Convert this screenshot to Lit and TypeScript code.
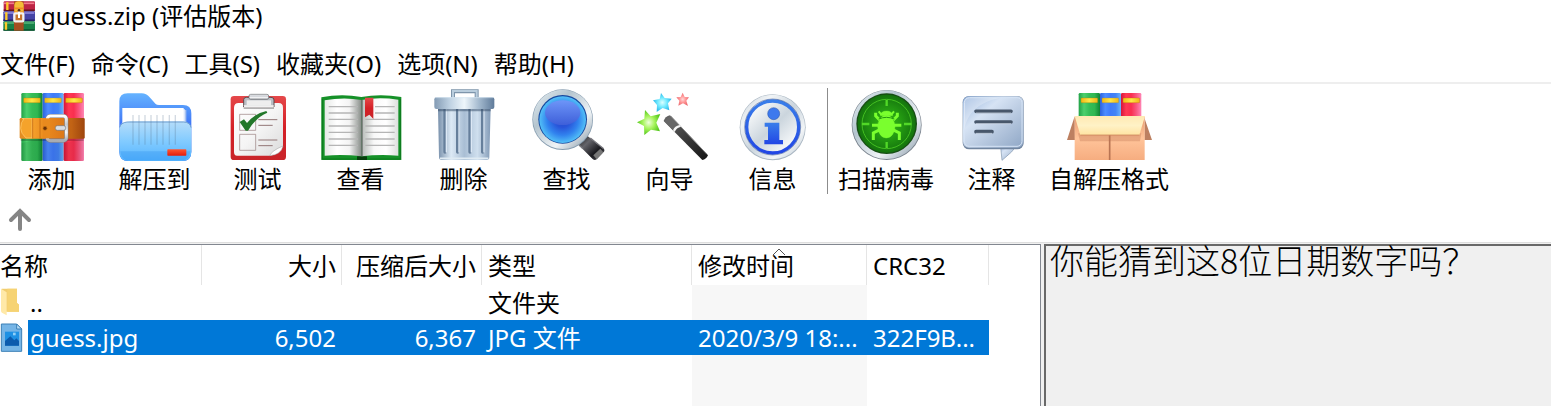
import { LitElement, html, svg, css, SVGTemplateResult } from "lit";
import { customElement, state } from "lit/decorators.js";

interface Tool {
  label: string;
  viewBox: string;
  art: SVGTemplateResult;
  separated?: boolean;
}

const books = (x: number, y: number, h: number) => svg`
  <rect x=${x} y=${y} width="64" height=${h} rx="4" fill="url(#bookGreen)"/>
  <rect x=${x + 64} y=${y} width="63" height=${h} rx="4" fill="url(#bookBlue)"/>
  <rect x=${x + 127} y=${y} width="61" height=${h} rx="4" fill="url(#bookRed)"/>
  <rect x=${x + 7} y=${y + 15} width="50" height="14" rx="2" fill="url(#label)" stroke="#b07c00"/>
  <rect x=${x + 70} y=${y + 15} width="50" height="14" rx="2" fill="url(#label)" stroke="#a08840"/>
  <rect x=${x + 133} y=${y + 15} width="50" height="14" rx="2" fill="url(#label)" stroke="#c06000"/>`;

const tools: Tool[] = [
  {
    label: "添加",
    viewBox: "10 24 288 222",
    art: svg`
      ${books(62, 39, 204)}
      <path d="M62 190 L125 175 L188 190 L249 175 V243 H62Z" fill="#000" opacity=".07"/>
      <rect x="60" y="174" width="189" height="9" fill="#000" opacity=".22"/>
      <rect x="57" y="114" width="195" height="62" rx="4" fill="url(#strap)"/>
      <path d="M64 116 H94 V174 H76 Q60 160 60 145 Q60 126 70 116Z" fill="#f5a32b" stroke="#ffcf73" stroke-width="2"/>
      <path d="M96 115 V175 M118 115 V175" stroke="#b95d0c" stroke-width="2"/>
      <rect x="202" y="114" width="50" height="62" fill="#8c3408" opacity=".25"/>
      <rect x="140" y="108" width="57" height="74" rx="9" fill="none" stroke="#7d7d85" stroke-width="12"/>
      <rect x="140" y="108" width="57" height="74" rx="9" fill="none" stroke="url(#steel)" stroke-width="9"/>
      <rect x="126" y="115" width="22" height="60" fill="#e98a1e"/>
      <circle cx="133" cy="145" r="6" fill="#6a3107" stroke="#c97514" stroke-width="2"/>
      <rect x="164" y="137" width="31" height="14" rx="6" fill="#d9dde3" stroke="#73767c" stroke-width="2"/>`,
  },
  {
    label: "解压到",
    viewBox: "320 24 288 222",
    art: svg`
      <path d="M357 64 Q357 40 382 40 H424 Q438 40 448 52 L466 72 Q469 75 476 75 H548 Q573 75 573 100 V215 Q573 243 545 243 H385 Q357 243 357 215Z" fill="url(#folderBack)"/>
      <path d="M380 90 H558 V195 H380Z" fill="#a9c2ef"/>
      <path d="M372 88 H554 V195 H372Z" fill="#d8e4fa"/>
      <rect x="366" y="84" width="184" height="115" fill="#fff"/>
      <path d="M357 145 Q358 128 376 126 L390 124 H548 Q573 126 573 146 V215 Q573 243 545 243 H385 Q357 243 357 215Z" fill="url(#folderFront)"/>
      <path d="M358 142 Q362 128 380 126 H550 Q570 127 572 143" fill="none" stroke="#4f83bd" stroke-width="2"/>
      <path d="M398 105V194M416 105V194M434 105V194M452 105V194M470 105V194M488 105V194M507 105V194M525 105V194" stroke="#52718e" stroke-width="4" opacity=".25"/>
      <path d="M360 214 H570 Q566 241 545 241 H385 Q362 241 360 214Z" fill="#2489e8" opacity=".28"/>
      <rect x="501" y="208" width="57" height="19" rx="2" fill="url(#redBar)"/>`,
  },
  {
    label: "测试",
    viewBox: "-1 24 288 222",
    art: svg`
      <rect x="61" y="48" width="166" height="192" rx="10" fill="url(#board)"/>
      <path d="M71 84 Q71 69 85 69 H205 Q218 69 218 83 V199 Q207 224 180 227 H80 Q71 227 71 216Z" fill="url(#paper)"/>
      <path d="M178 227 Q184 212 218 198 Q213 224 178 227Z" fill="#fff" stroke="#999" stroke-width="1.5"/>
      <path d="M100 77 V59 Q100 52 109 52 H182 Q191 52 191 60 V81 H100Z" fill="#b9bec4" stroke="#5e4a4c" stroke-width="3"/>
      <rect x="109" y="61" width="73" height="15" fill="#eee"/>
      <rect x="116" y="43" width="59" height="15" rx="5" fill="url(#steel)" stroke="#686b70" stroke-width="2"/>
      <path d="M101 79H190" stroke="#f1f1f1" stroke-width="7"/><path d="M100 85H191" stroke="#777" stroke-width="2"/>
      <path d="M88 103H136V151H88ZM88 163H136V211H88Z" fill="none" stroke="#957c7c" stroke-width="2"/>
      <path d="M144 119H201M144 136H187M144 180H201M144 197H187" stroke="#927676" stroke-width="3"/>
      <path d="M88 126 L101 118 L110 129 Q135 99 168 93 L171 98 Q137 112 113 152 H106Z" fill="#23772a"/>`,
  },
  {
    label: "查看",
    viewBox: "308 24 288 222",
    art: svg`
      <path d="M333 52 Q393 40 453 51 Q510 40 573 51 V240 H333Z" fill="#159128"/>
      <path d="M336 57V237H570V57" fill="none" stroke="#0b6d18" stroke-width="2"/>
      <rect x="440" y="229" width="30" height="11" fill="#073d0c"/>
      <path d="M343 61 Q400 50 454 60 V229 Q399 222 343 227Z" fill="url(#pageLeft)"/>
      <path d="M454 60 Q505 50 564 59 V227 Q507 222 454 229Z" fill="url(#pageRight)"/>
      <path d="M455 60V229" stroke="#4a504c" stroke-width="3"/>
      <path d="M355 80H443M355 99H443M355 118H443M355 138H443M355 157H443M355 177H443M355 196H443M494 80H553M494 99H553M465 118H553M465 138H553M465 157H553M465 177H553M465 196H553" stroke="#b5b5b5" stroke-width="4"/>
      <path d="M464 53H489V117L477 104L464 112Z" fill="url(#board)"/>`,
  },
  {
    label: "删除",
    viewBox: "-13 24 288 222",
    art: svg`
      <path d="M98 56V34H169V56" fill="none" stroke="#7e95ab" stroke-width="12"/>
      <path d="M98 56V33H169V56" fill="none" stroke="#b9cddd" stroke-width="6"/>
      <path d="M53 84H211L207 232Q207 240 198 240H64Q56 240 56 231Z" fill="url(#bin)"/>
      <path d="M74 88V216M112 88V216M149 88V216M187 88V216" stroke="#667f9b" stroke-width="10" stroke-linecap="round"/>
      <path d="M78 88V216M116 88V216M153 88V216M191 88V216" stroke="#dce8f5" stroke-width="4" stroke-linecap="round"/>
      <path d="M53 85H211V94H53Z" fill="#314966" opacity=".5"/>
      <rect x="42" y="52" width="180" height="35" rx="6" fill="url(#binLid)"/>
      <path d="M46 53H219" stroke="#d6e5f1" stroke-width="2"/>
      <path d="M59 235H204" stroke="#e0ebf3" stroke-width="5"/>`,
  },
  {
    label: "查找",
    viewBox: "296 24 288 222",
    art: svg`
      <path d="M484 174 L497 164 L550 206 Q555 211 549 217 L529 238 Q523 243 517 237 L474 194Z" fill="url(#handle)"/>
      <path d="M510 174 L550 206 M477 196 L488 206" stroke="#77777d" stroke-width="4"/>
      <path d="M529 238 L549 217 L540 206 L519 226Z" fill="#777"/>
      <circle cx="427" cy="119" r="91" fill="#869caf"/>
      <circle cx="427" cy="118" r="89" fill="url(#rim)"/>
      <circle cx="427" cy="118" r="73" fill="#17489f"/>
      <circle cx="427" cy="119" r="70" fill="url(#lens)"/>
      <ellipse cx="427" cy="98" rx="53" ry="37" fill="url(#gloss)"/>`,
  },
  {
    label: "向导",
    viewBox: "5 24 288 222",
    art: svg`
      <path d="M149 106 L263 226 Q257 239 246 240 L130 123Q134 110 149 106Z" fill="url(#wand)"/>
      <path d="M149 108 L180 140 L159 151 L132 124Z" fill="#676767"/>
      <path d="M151 108 L260 223" stroke="#8a8a8a" stroke-width="3"/>
      <path d="M158 151 Q163 138 178 135 L182 140 Q168 143 163 156Z" fill="#f6f6f6"/>
      <path d="M74 90 L91 109 L120 102 L108 128 L119 154 L92 149 L72 165 L71 138 L50 127 L72 116Z" fill="url(#starGreen)"/>
      <path d="M122 39 L133 54 L154 56 L143 70 L147 91 L127 84 L109 96 L110 75 L98 61 L118 57Z" fill="url(#starCyan)"/>
      <path d="M187 38 L193 51 L206 52 L198 62 L203 78 L188 70 L174 77 L177 62 L168 52 L181 51Z" fill="url(#starRed)"/>`,
  },
  {
    label: "信息",
    viewBox: "313 24 288 222",
    art: svg`
      <circle cx="456" cy="142" r="99" fill="#a9b6c2"/>
      <circle cx="456" cy="141" r="97" fill="url(#disc)"/>
      <circle cx="456" cy="141" r="78" fill="none" stroke="url(#infoBlue)" stroke-width="10"/>
      <circle cx="456" cy="141" r="84" fill="none" stroke="#26478e" stroke-width="1.5"/>
      <circle cx="459" cy="101" r="18" fill="#3d79ed" stroke="#2451a4" stroke-width="1.5"/>
      <path d="M432 128H476V180H487V193H431V180H442V140H432Z" fill="url(#infoBlue)"/>`,
  },
  {
    label: "扫描病毒",
    viewBox: "52 24 288 222",
    separated: true,
    art: svg`
      <circle cx="198" cy="135" r="105" fill="#78818c"/>
      <circle cx="198" cy="134" r="103" fill="url(#rim)"/>
      <circle cx="198" cy="131" r="91" fill="#174e14"/>
      <circle cx="198" cy="131" r="87" fill="url(#radar)"/>
      <circle cx="198" cy="132" r="74" fill="none" stroke="#43bf21" stroke-width="3"/>
      <path d="M198 60V78M198 186V204M124 132H146M250 132H272" stroke="#51d827" stroke-width="7"/>
      <g fill="#7aff2e" stroke="#7aff2e">
        <path d="M179 107 Q180 93 198 93 Q214 93 216 107Z"/>
        <ellipse cx="197" cy="140" rx="26" ry="34"/>
        <path d="M182 104L174 94M212 104L220 94" stroke-width="6"/>
        <path d="M177 120L165 108V98M218 120L230 108V98M174 136H154M220 136H242M178 149L158 159V180M216 149L236 159V180" fill="none" stroke-width="9"/>
      </g>
      <path d="M174 117Q197 107 221 117" stroke="#249812" stroke-width="3" fill="none"/>`,
  },
  {
    label: "注释",
    viewBox: "367 24 288 222",
    art: svg`
      <path d="M536 190H590Q574 216 541 241Z" fill="url(#bubble)" stroke="#8195ae" stroke-width="2"/>
      <rect x="423" y="48" width="183" height="160" rx="19" fill="#71859f"/>
      <rect x="424" y="49" width="181" height="154" rx="18" fill="url(#bubble)"/>
      <rect x="428" y="53" width="173" height="146" rx="15" fill="none" stroke="#d5e3f5" stroke-width="3"/>
      <path d="M427 153 Q437 74 534 53 H445 Q428 53 427 70Z" fill="#fff" opacity=".25"/>
      <path d="M463 94H568M463 126H568M463 155H511" stroke="#48576b" stroke-width="11" stroke-linecap="round"/>
      <path d="M463 99H568M463 131H568M463 160H511" stroke="#e3ecf7" stroke-width="2"/>`,
  },
  {
    label: "自解压格式",
    viewBox: "88 24 288 222",
    art: svg`
      ${books(141, 39, 80)}
      <path d="M129 109L106 180H130ZM339 116L361 180H338Z" fill="#bd8061"/>
      <rect x="129" y="110" width="210" height="130" fill="url(#carton)"/>
      <path d="M139 160H329L325 184H145Z" fill="#b66b45" opacity=".3"/>
      <path d="M234 166V240" stroke="#b97453" stroke-width="5"/>
      <path d="M129 108H340L323 165H146Z" fill="url(#flap)"/>
      <path d="M146 165H323" stroke="#c37a50" stroke-width="2"/>`,
  },
];

const gradient = (id: string, dir: "h" | "v" | "d", ...stops: string[]) => svg`
  <linearGradient id=${id} x1="0" y1="0" x2=${dir === "v" ? 0 : 1} y2=${dir === "h" ? 0 : 1}>
    ${stops.map((c, i) => svg`<stop offset=${i / (stops.length - 1)} stop-color=${c}></stop>`)}
  </linearGradient>`;

const radial = (id: string, ...stops: string[]) => svg`
  <radialGradient id=${id}>
    ${stops.map((c, i) => svg`<stop offset=${i / (stops.length - 1)} stop-color=${c}></stop>`)}
  </radialGradient>`;

const paints = svg`<defs>
  ${gradient("bookGreen", "h", "#22a247", "#4cd06d", "#35bd58", "#2fb752", "#0e8434")}
  ${gradient("bookBlue", "h", "#2c62dc", "#4d8cff", "#3f7bfa", "#4384f6", "#6db4fa")}
  ${gradient("bookRed", "h", "#d5153a", "#ff3853", "#f92f50", "#f9567f", "#ff86b6")}
  ${gradient("label", "h", "#f2b814", "#ffe747", "#efb516")}
  ${gradient("strap", "h", "#e08a20", "#f5a02b", "#e98a1e", "#e07c1a", "#d3731a", "#a54c10")}
  ${gradient("steel", "v", "#ffffff", "#c8ccd2", "#f5f5f7", "#a8abb1")}
  ${gradient("folderBack", "v", "#65b3ff", "#3c71f6", "#1c50da")}
  ${gradient("folderFront", "v", "#b6ddfa", "#82cbff", "#55b4ff")}
  ${gradient("redBar", "v", "#ff5733", "#e51c0b")}
  ${gradient("board", "v", "#e5484a", "#d42026", "#c9252a")}
  ${gradient("paper", "d", "#ffffff", "#f5f5f5", "#dadada")}
  ${gradient("pageLeft", "h", "#e6e8e6", "#ffffff", "#f4f4f4", "#858b86")}
  ${gradient("pageRight", "h", "#b6bbb7", "#f8f8f8", "#ffffff", "#dcdfdc")}
  ${gradient("bin", "h", "#7890ab", "#dce9f5", "#a9bed4", "#cfdfee", "#829ab6")}
  ${gradient("binLid", "h", "#839bb4", "#bdd0e1", "#eef6fb", "#a2b8cd", "#5f7b9a")}
  ${gradient("handle", "d", "#111", "#64646a", "#1b1b20", "#55555a")}
  ${gradient("rim", "d", "#e9f1f5", "#b5c5cf", "#eff3f6", "#7e91a1")}
  ${gradient("gloss", "v", "#6d95f8", "#3e5fd9")}
  ${gradient("wand", "d", "#686868", "#3b3b3b", "#151515")}
  ${gradient("disc", "d", "#c6d0da", "#f1f4f6", "#cbd5dd", "#f2f5f7", "#b8c5d0")}
  ${gradient("infoBlue", "v", "#397eea", "#2146e5")}
  ${gradient("bubble", "d", "#94b2dc", "#d6e3f4", "#b2c4dc", "#8fa7c6")}
  ${gradient("carton", "v", "#e99d70", "#ffc49a", "#f6ad80")}
  ${gradient("flap", "v", "#ffe9b3", "#fff2c6", "#ffe4a2")}
  ${radial("lens", "#244bce", "#2855da", "#3182ee", "#52c0f7")}
  ${radial("starGreen", "#efffdd", "#a7f45d", "#58c91f")}
  ${radial("starCyan", "#ddffff", "#72eaff", "#2eb9ea")}
  ${radial("starRed", "#ffd9d9", "#ff9696", "#ec6d73")}
  ${radial("radar", "#38b816", "#249b12", "#14730d")}
</defs>`;

const logo = html`<svg class="logo" viewBox="0 0 96 90" aria-hidden="true">
  <rect x="2" y="1" width="94" height="30" rx="3" fill="#bd2545"/>
  <path d="M3 7H94" stroke="#f17c8c" stroke-width="5"/><path d="M2 28H95" stroke="#64121f" stroke-width="5"/>
  <rect x="1" y="31" width="95" height="30" rx="3" fill="#4543a5"/>
  <path d="M3 36H94" stroke="#8d87dd" stroke-width="5"/><path d="M1 58H95" stroke="#252065" stroke-width="5"/>
  <rect x="1" y="61" width="95" height="28" rx="3" fill="#188148"/>
  <path d="M3 66H94" stroke="#62bd83" stroke-width="4"/><path d="M1 87H95" stroke="#09492a" stroke-width="4"/>
  <path d="M13 4V27M10 34V57M9 64V86" stroke="#ffc928" stroke-width="7"/>
  <rect x="33" y="1" width="29" height="88" fill="#a64e20"/>
  <path d="M34 13Q34 1 48 1Q62 1 62 13V36H34Z" fill="#f4bd37"/>
  <path d="M34 22H62M34 34H62" stroke="#f08a26" stroke-width="5"/>
  <rect x="34" y="37" width="27" height="24" rx="3" fill="#c8752c" stroke="#f2f2f2" stroke-width="7"/>
  <path d="M48 30V51" stroke="#fff" stroke-width="6"/><circle cx="48" cy="28" r="4" fill="#583010"/>
</svg>`;

const folderIcon = html`<svg class="file-icon" viewBox="0 0 72 90" aria-hidden="true">
  <path d="M5 2H51V45L57 50V71H18Z" fill="#f1cd70"/>
  <path d="M22 2H51V45L57 50V71H22Z" fill="#f6d373"/>
  <path d="M3 2L20 13V82L6 74Q3 72 3 68Z" fill="#ffe9a8"/>
</svg>`;

const imageIcon = html`<svg class="file-icon" viewBox="0 0 72 90" aria-hidden="true">
  <path d="M4 3H50L65 18V85H4Z" fill="#76b5e6" stroke="#3c80b6" stroke-width="3"/>
  <path d="M50 3V18H65Z" fill="#b9def7" stroke="#3c80b6" stroke-width="3"/>
  <rect x="15" y="26" width="42" height="42" fill="#1e91e4"/>
  <path d="M15 54L31 40L43 52L49 46L57 54V68H15Z" fill="#0c5bad"/>
  <rect x="39" y="29" width="8" height="8" fill="#91d0f8"/>
</svg>`;

@customElement("app-root")
export class AppRoot extends LitElement {
  @state() private selected = "guess.jpg";

  private menus = ["文件(F)", "命令(C)", "工具(S)", "收藏夹(O)", "选项(N)", "帮助(H)"];

  static styles = css`
    :host {
      display: flex;
      flex-direction: column;
      height: 100vh;
      overflow: hidden;
      background: #fff;
      color: #000;
      font: 24px/34px "Noto Sans", "Noto Sans CJK SC", sans-serif;
      white-space: nowrap;
    }
    button {
      margin: 0;
      padding: 0;
      border: 0;
      background: none;
      color: inherit;
      font: inherit;
    }
    svg { display: block; }
    .paints { position: absolute; width: 0; height: 0; }
    .title { display: flex; align-items: center; gap: 6px; height: 32px; padding-left: 3px; margin: 0 0 15px; font: inherit; }
    .logo { width: 32px; height: 30px; }
    .menu { display: flex; gap: 16px; padding-bottom: 1px; border-bottom: 2px solid #eee; }
    .tools { display: flex; padding-top: 4px; }
    .tool { display: flex; flex-direction: column; align-items: center; min-width: 103px; box-sizing: border-box; }
    .tool span { padding: 0 6px; }
    .art { width: 96px; height: 74px; }
    .rule { width: 1px; margin: 0 4px 2px 3px; background: #8c8c8c; }
    .path { display: flex; align-items: center; height: 46px; padding-left: 8px; border-bottom: 1px solid #dedede; }
    .up { width: 24px; height: 24px; }
    .panes { flex: 1; min-height: 0; display: grid; grid-template-columns: minmax(0, 1041fr) minmax(0, 507fr); gap: 3px; background: #f0f0f0; padding-top: 1px; }
    .list { background: #fff; border-top: 1px solid #828790; border-right: 1px solid #828790; overflow: hidden; }
    table { table-layout: fixed; width: 989px; height: 100%; border-collapse: separate; border-spacing: 0; }
    .c-name { width: 202px; }
    .c-size { width: 140px; }
    .c-type { width: 210px; }
    .c-date { width: 175px; }
    .c-crc { width: 122px; }
    th, td { padding: 0 6px; font-weight: 400; text-align: left; overflow: hidden; box-sizing: border-box; }
    th { position: relative; height: 40px; padding-top: 2px; border-right: 1px solid #e5e5e5; line-height: 36px; }
    td { height: 35px; line-height: 35px; }
    th:first-child { padding-left: 0; }
    td:first-child { padding: 0; }
    .num { text-align: right; }
    th.num { padding-right: 5px; }
    .sorted { background: #f7f7f7; }
    .selected td { background: #0078d7; color: #fff; }
    .selected td:first-child { background: #fff; }
    .name { display: flex; align-items: center; gap: 4px; }
    .file { flex: 1; padding-left: 2px; text-align: left; line-height: 35px; }
    .selected .file { background: #0078d7; }
    .file-icon { width: 24px; height: 30px; }
    .fill td { height: auto; }
    .caret { position: absolute; top: 3px; left: 80px; width: 14px; height: 8px; }
    .comment { background: #f0f0f0; border-top: 2px solid #696969; border-left: 2px solid #696969; padding-left: 4px; }
    .note { margin: 0; font: 300 34px/28px "Noto Sans CJK SC", sans-serif; }
  `;

  render() {
    return html`
      <svg class="paints" aria-hidden="true">${paints}</svg>
      <h1 class="title">${logo}<span>guess.zip (评估版本)</span></h1>
      <nav class="menu">${this.menus.map((m) => html`<button>${m}</button>`)}</nav>
      <div class="tools" role="toolbar">
        ${tools.map((t) => html`
          ${t.separated ? html`<div class="rule"></div>` : null}
          <button class="tool">
            <svg class="art" viewBox=${t.viewBox} aria-hidden="true">${t.art}</svg>
            <span>${t.label}</span>
          </button>`)}
      </div>
      <div class="path">
        <button aria-label="Up"><svg class="up" viewBox="0 0 24 24" fill="none" stroke="#858585" stroke-width="4" stroke-linecap="round"><path d="M12 22V5M3 13L12 4L21 13"/></svg></button>
      </div>
      <main class="panes">
        <section class="list">
          <table>
            <colgroup><col class="c-name"><col class="c-size"><col class="c-size"><col class="c-type"><col class="c-date"><col class="c-crc"></colgroup>
            <thead>
              <tr>
                <th>名称</th><th class="num">大小</th><th class="num">压缩后大小</th><th>类型</th>
                <th aria-sort="ascending">修改时间<svg class="caret" viewBox="0 0 14 8" fill="#fff" stroke="#555"><path d="M1 7L7 1L13 7"/></svg></th>
                <th>CRC32</th>
              </tr>
            </thead>
            <tbody>
              ${this.row("..", folderIcon, "", "", "文件夹", "", "")}
              ${this.row("guess.jpg", imageIcon, "6,502", "6,367", "JPG 文件", "2020/3/9 18:...", "322F9B...")}
              <tr class="fill"><td></td><td></td><td></td><td></td><td class="sorted"></td><td></td></tr>
            </tbody>
          </table>
        </section>
        <section class="comment"><p class="note">你能猜到这8位日期数字吗？</p></section>
      </main>`;
  }

  private row(name: string, icon: unknown, size: string, packed: string, type: string, date: string, crc: string) {
    return html`<tr class=${this.selected === name ? "selected" : ""}>
      <td><div class="name">${icon}<button class="file" @click=${() => (this.selected = name)}>${name}</button></div></td>
      <td class="num">${size}</td><td class="num">${packed}</td><td>${type}</td><td class="sorted">${date}</td><td>${crc}</td>
    </tr>`;
  }
}
